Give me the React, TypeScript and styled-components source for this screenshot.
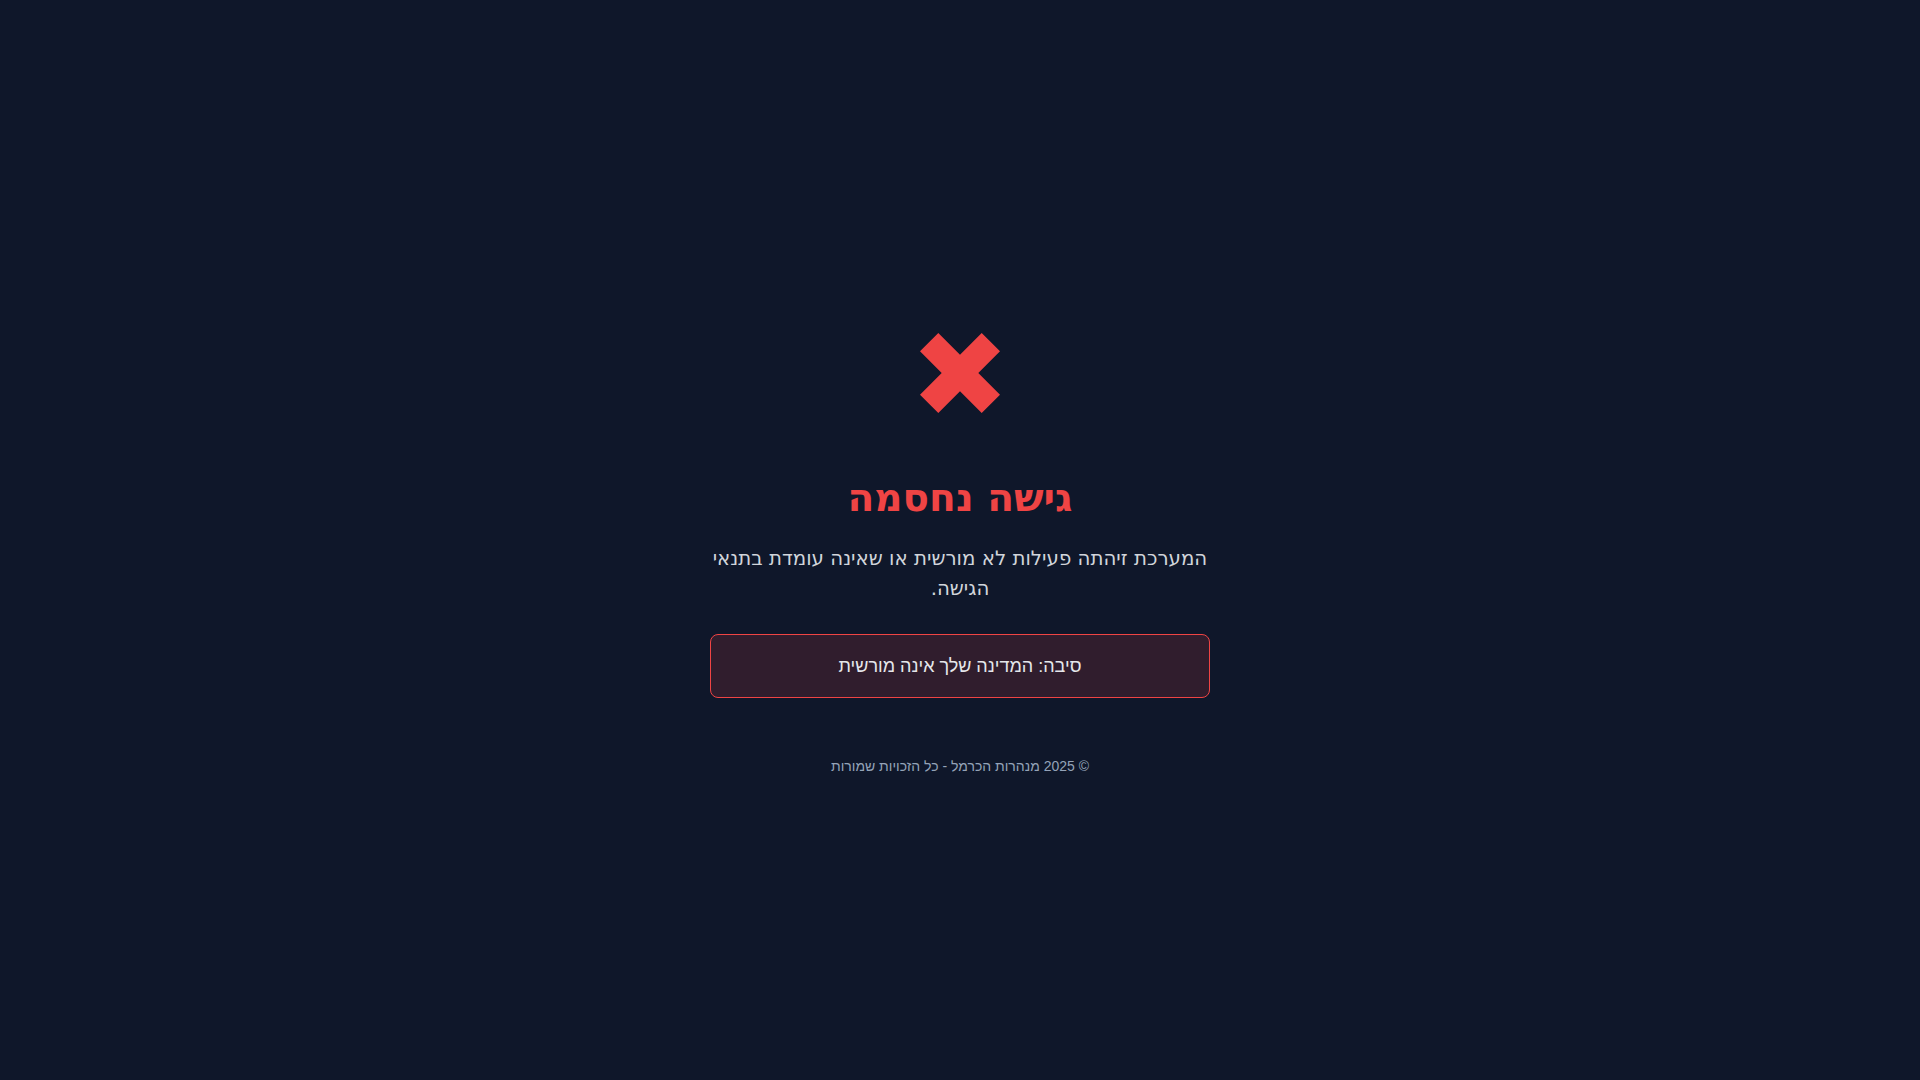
import React from 'react';
import styled, { createGlobalStyle } from 'styled-components';

const GlobalStyle = createGlobalStyle`
  html, body {
    margin: 0;
    padding: 0;
    background: #0f172a;
  }
  body {
    font-family: "DejaVu Sans", sans-serif;
  }
`;

const Page = styled.main`
  min-height: 100vh;
  box-sizing: border-box;
  padding-top: 29px;
  display: flex;
  align-items: center;
  justify-content: center;
  direction: rtl;
`;

const Card = styled.section`
  width: 500px;
  display: flex;
  flex-direction: column;
  align-items: center;
  text-align: center;
`;

const Icon = styled.svg`
  width: 80px;
  height: 80px;
  display: block;
  margin-bottom: 62px;
`;

const Title = styled.h1`
  margin: 0 0 23px;
  font-family: "DejaVu Sans", sans-serif;
  font-size: 39px;
  line-height: 46px;
  font-weight: 700;
  color: #ef4444;
`;

const Message = styled.p`
  margin: 0 0 30px;
  font-family: "DejaVu Sans", sans-serif;
  font-size: 19.8px;
  line-height: 30px;
  color: #d1d5db;
`;

const Reason = styled.div`
  box-sizing: border-box;
  width: 100%;
  height: 64px;
  display: flex;
  align-items: center;
  justify-content: center;
  border: 1px solid #ef4444;
  border-radius: 8px;
  background: rgba(239, 68, 68, 0.15);
  font-family: "Liberation Sans", Arial, sans-serif;
  font-size: 18px;
  color: #e5e7eb;
`;

const Footer = styled.footer`
  margin-top: 58px;
  font-family: "Liberation Sans", Arial, sans-serif;
  font-size: 14px;
  line-height: 20px;
  color: #94a3b8;
`;

const CrossIcon = () => (
  <Icon viewBox="0 0 80 80" aria-hidden="true">
    <polygon
      fill="#ef4444"
      points="18.3,0 40,21.7 61.7,0 80,18.3 58.3,40 80,61.7 61.7,80 40,58.3 18.3,80 0,61.7 21.7,40 0,18.3"
    />
  </Icon>
);

const App = () => {
  return (
    <>
      <GlobalStyle />
      <Page>
        <Card>
          <CrossIcon />
          <Title>גישה נחסמה</Title>
          <Message>המערכת זיהתה פעילות לא מורשית או שאינה עומדת בתנאי הגישה.</Message>
          <Reason>סיבה: המדינה שלך אינה מורשית</Reason>
          <Footer>© 2025 מנהרות הכרמל - כל הזכויות שמורות</Footer>
        </Card>
      </Page>
    </>
  );
};

export default App;
